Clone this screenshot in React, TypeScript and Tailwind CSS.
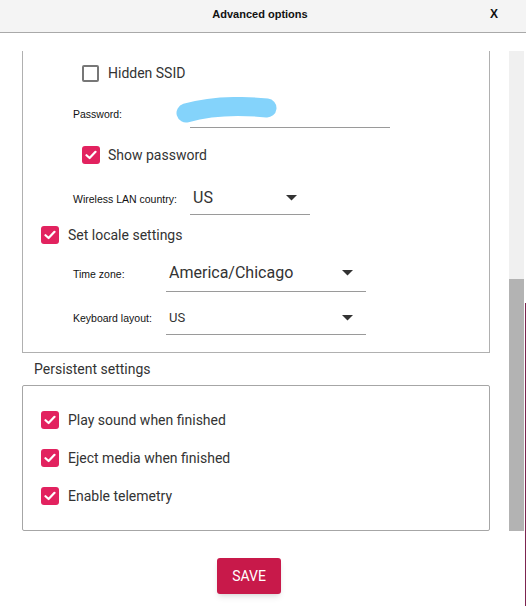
import React from "react";

function Checked() {
  return (
    <div className="w-[18px] h-[18px] rounded-[3px] bg-[#e2225f] flex items-center justify-center shrink-0">
      <svg width="12" height="10" viewBox="0 0 12 10">
        <path d="M1.5 5.2 L4.6 8 L10.5 1.8" fill="none" stroke="white" strokeWidth="2.2" strokeLinecap="round" strokeLinejoin="round" />
      </svg>
    </div>
  );
}

function Unchecked() {
  return <div className="w-[17px] h-[17px] rounded-[2px] border-2 border-[#777777] shrink-0" />;
}

function Arrow() {
  return (
    <svg width="11" height="6" viewBox="0 0 11 6">
      <path d="M0 0 L11 0 L5.5 5.5 Z" fill="#333333" />
    </svg>
  );
}

const label = "font-['Liberation_Sans',sans-serif] text-[10.5px] leading-[14px] text-[#111111]";
const main = "text-[14px] text-[#333333]";

export default function App() {
  return (
    <div className="w-[526px] h-[606px] bg-white relative overflow-hidden font-['Roboto',sans-serif]">
      <div className="h-[33px] bg-[#f4f4f4] border-b border-[#a9a9a9] flex items-center">
        <div className="w-[35px]" />
        <div className="flex-1 text-center font-['Liberation_Sans',sans-serif] font-bold text-[11px] text-[#111] pb-[4px]">
          Advanced options
        </div>
        <div className="w-[41px] pl-[5px] font-['Liberation_Sans',sans-serif] font-bold text-[12px] text-[#111] pb-[4px]">X</div>
      </div>
      <div className="flex">
        <div className="w-[509px]">
          <div className="ml-[22px] w-[468px] mt-[18px] border-x border-b border-[#b0b0b0] pt-[5px] pb-[17px]">
            <div className="h-[35px] flex items-center pl-[59px] gap-[9px]">
              <Unchecked />
              <span className={main}>Hidden SSID</span>
            </div>
            <div className="h-[37px] flex items-end pl-[50px]">
              <div className={`${label} w-[117px] mb-[7px]`}>Password:</div>
              <div className="relative w-[200px] h-[31px] border-b border-[#9a9a9a]">
                <svg className="absolute left-[-15px] top-[0px]" width="104" height="28" viewBox="0 0 104 28">
                  <path d="M11 16 C 32 10, 62 8, 92 11" fill="none" stroke="#84d3fb" strokeWidth="19" strokeLinecap="round" />
                </svg>
              </div>
            </div>
            <div className="h-[54px] flex items-center pl-[59px] gap-[8px]">
              <Checked />
              <span className={main}>Show password</span>
            </div>
            <div className="h-[33px] flex items-center pl-[50px]">
              <div className={`${label} w-[117px] pt-[1px]`}>Wireless LAN country:</div>
              <div className="w-[120px] h-full flex items-center justify-between pl-[3px] pr-[13px] border-b border-[#9a9a9a]">
                <span className="text-[16px] text-[#333333]">US</span>
                <Arrow />
              </div>
            </div>
            <div className="h-[40px] flex items-center pl-[18px] gap-[9px]">
              <Checked />
              <span className={main}>Set locale settings</span>
            </div>
            <div className="h-[37px] flex items-center pl-[50px]">
              <div className={`${label} w-[93px]`}>Time zone:</div>
              <div className="w-[200px] h-full flex items-center justify-between pl-[3px] pr-[13px] border-b border-[#9a9a9a]">
                <span className="text-[16px] text-[#333333]">America/Chicago</span>
                <Arrow />
              </div>
            </div>
            <div className="mt-[9px] h-[34px] flex items-center pl-[50px]">
              <div className={`${label} w-[93px]`}>Keyboard layout:</div>
              <div className="w-[200px] h-full flex items-center justify-between pl-[3px] pr-[13px] border-b border-[#9a9a9a]">
                <span className="text-[13px] text-[#333333]">US</span>
                <Arrow />
              </div>
            </div>
          </div>
          <div className="h-[32px] flex items-center pl-[34px]">
            <span className={main}>Persistent settings</span>
          </div>
          <div className="ml-[22px] w-[468px] h-[146px] border border-[#a6a6a6] rounded-[2px] pt-[15px]">
            {["Play sound when finished", "Eject media when finished", "Enable telemetry"].map((t) => (
              <div key={t} className="h-[38px] flex items-center pl-[18px] gap-[9px]">
                <Checked />
                <span className={main}>{t}</span>
              </div>
            ))}
          </div>
          <div className="mt-[27px] ml-[217px] w-[64px] h-[36px] rounded-[3px] bg-[#c8194a] shadow-md flex items-center justify-center text-white text-[14px]">
            SAVE
          </div>
        </div>
        <div className="w-[15px] mt-[18px] h-[480px] bg-[#f0f0f0] flex flex-col justify-end">
          <div className="h-[252px] bg-[#b3b3b3]" />
        </div>
      </div>
      <div className="absolute right-0 top-[303px] bottom-0 w-[1.5px] bg-[#7d2550]" />
    </div>
  );
}
